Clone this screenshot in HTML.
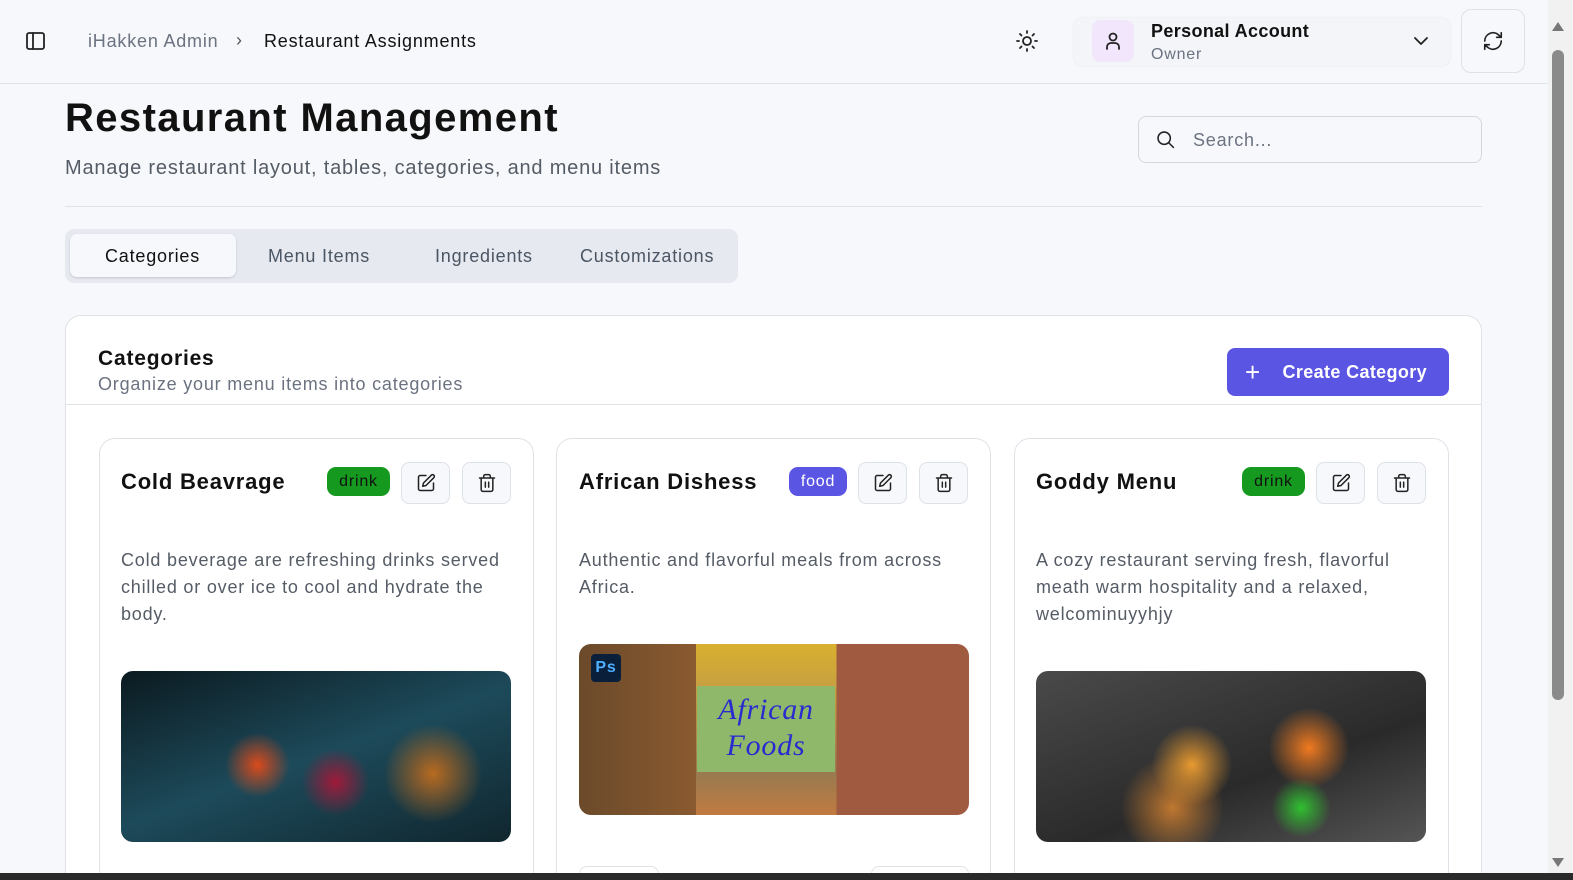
<!DOCTYPE html>
<html style="width:1573px;height:880px;overflow:hidden"><head><meta charset="utf-8"><style>
*{box-sizing:border-box;margin:0;padding:0}
body{width:1573px;height:880px;overflow:hidden;background:#f6f8fb;font-family:"Liberation Sans",sans-serif;color:#111;position:relative;letter-spacing:0.05em}
.abs{position:absolute}
.hdr{left:0;top:0;width:1548px;height:84px;border-bottom:1px solid #dfe3e8;background:#f6f8fb}
.ico{stroke:#222;fill:none;stroke-width:1.8;stroke-linecap:round;stroke-linejoin:round}
.btn{border:1px solid #dde2e8;border-radius:8px;background:#f6f8fb;display:flex;align-items:center;justify-content:center}
.card{background:#fff;border:1px solid #dfe3e8;border-radius:16px}
.badge{color:#111;font-size:16px;border-radius:9px;display:flex;align-items:center;justify-content:center;height:29px}
.desc{font-size:18px;line-height:27px;color:#555c66}
.ct{font-size:22px;font-weight:bold;color:#111}
</style></head><body>
<div class="abs hdr"></div>
<svg class="abs" style="left:25px;top:31px" width="22" height="20" viewBox="0 0 22 20"><rect x="2" y="2" width="17" height="16" rx="2" class="ico"/><line x1="8" y1="2" x2="8" y2="18" class="ico"/></svg>
<div class="abs" style="left:88px;top:31px;font-size:18px;color:#6b7280">iHakken Admin</div>
<div class="abs" style="left:236px;top:30px;font-size:18px;color:#555">›</div>
<div class="abs" style="left:264px;top:31px;font-size:18px;color:#111">Restaurant Assignments</div>
<svg class="abs" style="left:1016px;top:30px" width="22" height="22" viewBox="0 0 22 22"><circle cx="11" cy="11" r="4" class="ico" stroke-width="1.5"/><g class="ico" stroke-width="1.5"><line x1="11" y1="1" x2="11" y2="3"/><line x1="11" y1="19" x2="11" y2="21"/><line x1="1" y1="11" x2="3" y2="11"/><line x1="19" y1="11" x2="21" y2="11"/><line x1="4" y1="4" x2="5.5" y2="5.5"/><line x1="16.5" y1="16.5" x2="18" y2="18"/><line x1="4" y1="18" x2="5.5" y2="16.5"/><line x1="16.5" y1="5.5" x2="18" y2="4"/></g></svg>
<div class="abs" style="left:1074px;top:18px;width:376px;height:48px;border-radius:8px;background:#f3f5f8;box-shadow:0 0 2px #e3e6ea"></div>
<div class="abs" style="left:1092px;top:20px;width:42px;height:42px;border-radius:8px;background:#f1e6fb"></div>
<svg class="abs" style="left:1103px;top:31px" width="20" height="20" viewBox="0 0 20 20"><circle cx="10" cy="6" r="3.5" class="ico" stroke="#555" stroke-width="1.4"/><path d="M4 18v-2a4 4 0 0 1 4-4h4a4 4 0 0 1 4 4v2" class="ico" stroke="#555" stroke-width="1.4"/></svg>
<div class="abs" style="left:1151px;top:21px;font-size:18px;font-weight:bold;letter-spacing:0.02em">Personal Account</div>
<div class="abs" style="left:1151px;top:46px;font-size:16px;color:#6b7280">Owner</div>
<svg class="abs" style="left:1413px;top:35px" width="16" height="12" viewBox="0 0 16 12"><path d="M2 3l6 6 6-6" class="ico" stroke="#999" stroke-width="1.4"/></svg>
<div class="abs btn" style="left:1461px;top:9px;width:64px;height:64px;border-radius:10px">
<svg width="22" height="22" viewBox="0 0 24 24"><path d="M3 12a9 9 0 0 1 15-6.7L21 8M21 3v5h-5M21 12a9 9 0 0 1-15 6.7L3 16M3 21v-5h5" class="ico" stroke-width="2"/></svg></div>

<div class="abs" style="left:65px;top:96px;font-size:40px;font-weight:bold;color:#111;letter-spacing:0.035em">Restaurant Management</div>
<div class="abs" style="left:65px;top:157px;font-size:20px;color:#555c66">Manage restaurant layout, tables, categories, and menu items</div>
<div class="abs" style="left:1138px;top:116px;width:344px;height:47px;border:1.5px solid #d4d8de;border-radius:8px;background:#f6f8fb"></div>
<svg class="abs" style="left:1155px;top:129px" width="21" height="21" viewBox="0 0 24 24"><circle cx="10.5" cy="10.5" r="7" class="ico" stroke="#333" stroke-width="2"/><line x1="16" y1="16" x2="21" y2="21" class="ico" stroke="#333" stroke-width="2"/></svg>
<div class="abs" style="left:1193px;top:130px;font-size:18px;color:#6b7280">Search...</div>
<div class="abs" style="left:65px;top:206px;width:1417px;height:1px;background:#dfe3e8"></div>

<div class="abs" style="left:65px;top:229px;width:673px;height:54px;background:#e6eaf0;border-radius:9px"></div>
<div class="abs" style="left:70px;top:234px;width:166px;height:43px;background:#f6f8fb;border-radius:7px;box-shadow:0 1px 2px rgba(0,0,0,.15)"></div>
<div class="abs" style="left:105px;top:246px;font-size:18px;color:#111">Categories</div>
<div class="abs" style="left:268px;top:246px;font-size:18px;color:#4b5563">Menu Items</div>
<div class="abs" style="left:435px;top:246px;font-size:18px;color:#4b5563">Ingredients</div>
<div class="abs" style="left:580px;top:246px;font-size:18px;color:#4b5563">Customizations</div>

<div class="abs card" style="left:65px;top:315px;width:1417px;height:600px"></div>
<div class="abs" style="left:66px;top:404px;width:1415px;height:1px;background:#dfe3e8"></div>
<div class="abs" style="left:98px;top:347px;font-size:21px;font-weight:bold">Categories</div>
<div class="abs" style="left:98px;top:374px;font-size:18px;color:#6b7280">Organize your menu items into categories</div>
<div class="abs" style="left:1227px;top:348px;width:222px;height:48px;background:#5b55e4;border-radius:8px;color:#fff;font-size:18px;font-weight:bold;display:flex;align-items:center;padding-left:18px;letter-spacing:0.02em"><span style="font-size:26px;font-weight:normal;margin-right:22px">+</span>Create Category</div>

<!-- card 1 -->
<div class="abs card" style="left:99px;top:438px;width:435px;height:480px"></div>
<div class="abs ct" style="left:121px;top:469px">Cold Beavrage</div>
<div class="abs badge" style="left:327px;top:467px;width:63px;background:#16991f">drink</div>
<div class="abs btn" style="left:401px;top:462px;width:49px;height:42px"><svg width="20" height="20" viewBox="0 0 24 24"><path d="M12 3H5a2 2 0 0 0-2 2v14a2 2 0 0 0 2 2h14a2 2 0 0 0 2-2v-7M18.4 2.6a2.1 2.1 0 1 1 3 3L12 15l-4 1 1-4z" class="ico" stroke-width="2"/></svg></div>
<div class="abs btn" style="left:462px;top:462px;width:49px;height:42px"><svg width="20" height="20" viewBox="0 0 24 24"><path d="M3 6h18M19 6v14a2 2 0 0 1-2 2H7a2 2 0 0 1-2-2V6M8 6V4a2 2 0 0 1 2-2h4a2 2 0 0 1 2 2v2M10 11v6M14 11v6" class="ico" stroke-width="2"/></svg></div>
<div class="abs desc" style="left:121px;top:547px;width:380px">Cold beverage are refreshing drinks served chilled or over ice to cool and hydrate the body.</div>
<div class="abs" style="left:121px;top:671px;width:390px;height:171px;border-radius:12px;background:radial-gradient(circle at 35% 55%,#d94a1c 0,transparent 12%),radial-gradient(circle at 55% 65%,#a01a3a 0,transparent 14%),radial-gradient(circle at 80% 60%,#b86a20 0,transparent 15%),linear-gradient(160deg,#0b1a20,#1d4a5a 50%,#10262e)"></div>

<!-- card 2 -->
<div class="abs card" style="left:556px;top:438px;width:435px;height:480px"></div>
<div class="abs ct" style="left:579px;top:469px">African Dishess</div>
<div class="abs badge" style="left:789px;top:467px;width:58px;background:#5b55e4;color:#fff">food</div>
<div class="abs btn" style="left:858px;top:462px;width:49px;height:42px"><svg width="20" height="20" viewBox="0 0 24 24"><path d="M12 3H5a2 2 0 0 0-2 2v14a2 2 0 0 0 2 2h14a2 2 0 0 0 2-2v-7M18.4 2.6a2.1 2.1 0 1 1 3 3L12 15l-4 1 1-4z" class="ico" stroke-width="2"/></svg></div>
<div class="abs btn" style="left:919px;top:462px;width:49px;height:42px"><svg width="20" height="20" viewBox="0 0 24 24"><path d="M3 6h18M19 6v14a2 2 0 0 1-2 2H7a2 2 0 0 1-2-2V6M8 6V4a2 2 0 0 1 2-2h4a2 2 0 0 1 2 2v2M10 11v6M14 11v6" class="ico" stroke-width="2"/></svg></div>
<div class="abs desc" style="left:579px;top:547px;width:375px">Authentic and flavorful meals from across Africa.</div>
<div class="abs" style="left:579px;top:644px;width:390px;height:171px;border-radius:12px;overflow:hidden;background:linear-gradient(90deg,#6b4a2a 0,#8a5a30 30%,transparent 30%,transparent 66%,#a05a40 66%),linear-gradient(180deg,#d8b030 0,#c8a040 24%,#9a7a50 76%,#c07a40 100%)">
<div style="position:absolute;left:118px;top:42px;width:138px;height:86px;background:#8fb86a;color:#2a2ad0;font:italic 30px 'Liberation Serif',serif;text-align:center;line-height:36px;padding-top:6px">African<br>Foods</div>
<div style="position:absolute;left:12px;top:10px;width:30px;height:28px;background:#0a1f3a;color:#4fb0ff;font:bold 16px 'Liberation Sans';border-radius:4px;text-align:center;line-height:28px">Ps</div></div>
<div class="abs" style="left:579px;top:866px;width:80px;height:20px;border:1px solid #dfe3e8;border-radius:8px"></div>
<div class="abs" style="left:871px;top:866px;width:98px;height:20px;border:1px solid #dfe3e8;border-radius:8px"></div>

<!-- card 3 -->
<div class="abs card" style="left:1014px;top:438px;width:435px;height:480px"></div>
<div class="abs ct" style="left:1036px;top:469px">Goddy Menu</div>
<div class="abs badge" style="left:1242px;top:467px;width:63px;background:#16991f">drink</div>
<div class="abs btn" style="left:1316px;top:462px;width:49px;height:42px"><svg width="20" height="20" viewBox="0 0 24 24"><path d="M12 3H5a2 2 0 0 0-2 2v14a2 2 0 0 0 2 2h14a2 2 0 0 0 2-2v-7M18.4 2.6a2.1 2.1 0 1 1 3 3L12 15l-4 1 1-4z" class="ico" stroke-width="2"/></svg></div>
<div class="abs btn" style="left:1377px;top:462px;width:49px;height:42px"><svg width="20" height="20" viewBox="0 0 24 24"><path d="M3 6h18M19 6v14a2 2 0 0 1-2 2H7a2 2 0 0 1-2-2V6M8 6V4a2 2 0 0 1 2-2h4a2 2 0 0 1 2 2v2M10 11v6M14 11v6" class="ico" stroke-width="2"/></svg></div>
<div class="abs desc" style="left:1036px;top:547px;width:370px">A cozy restaurant serving fresh, flavorful meath warm hospitality and a relaxed, welcominuyyhjy</div>
<div class="abs" style="left:1036px;top:671px;width:390px;height:171px;border-radius:12px;background:radial-gradient(circle at 40% 55%,#e89a30 0,transparent 16%),radial-gradient(circle at 70% 45%,#f07a20 0,transparent 14%),radial-gradient(circle at 68% 80%,#30c030 0,transparent 10%),radial-gradient(circle at 35% 80%,#c07830 0,transparent 18%),linear-gradient(160deg,#4a4a4a,#2a2a2a 60%,#555)"></div>

<!-- scrollbar -->
<div class="abs" style="left:1548px;top:0;width:25px;height:880px;background:#f1f1f1"></div>
<div class="abs" style="left:1552px;top:50px;width:12px;height:650px;background:#8a8a8a;border-radius:6px"></div>
<div class="abs" style="left:1552px;top:22px;width:0;height:0;border-left:6px solid transparent;border-right:6px solid transparent;border-bottom:9px solid #777"></div>
<div class="abs" style="left:1552px;top:858px;width:0;height:0;border-left:6px solid transparent;border-right:6px solid transparent;border-top:9px solid #777"></div>
<div class="abs" style="left:0;top:873px;width:1573px;height:7px;background:#2a2a2a"></div>
</body></html>
